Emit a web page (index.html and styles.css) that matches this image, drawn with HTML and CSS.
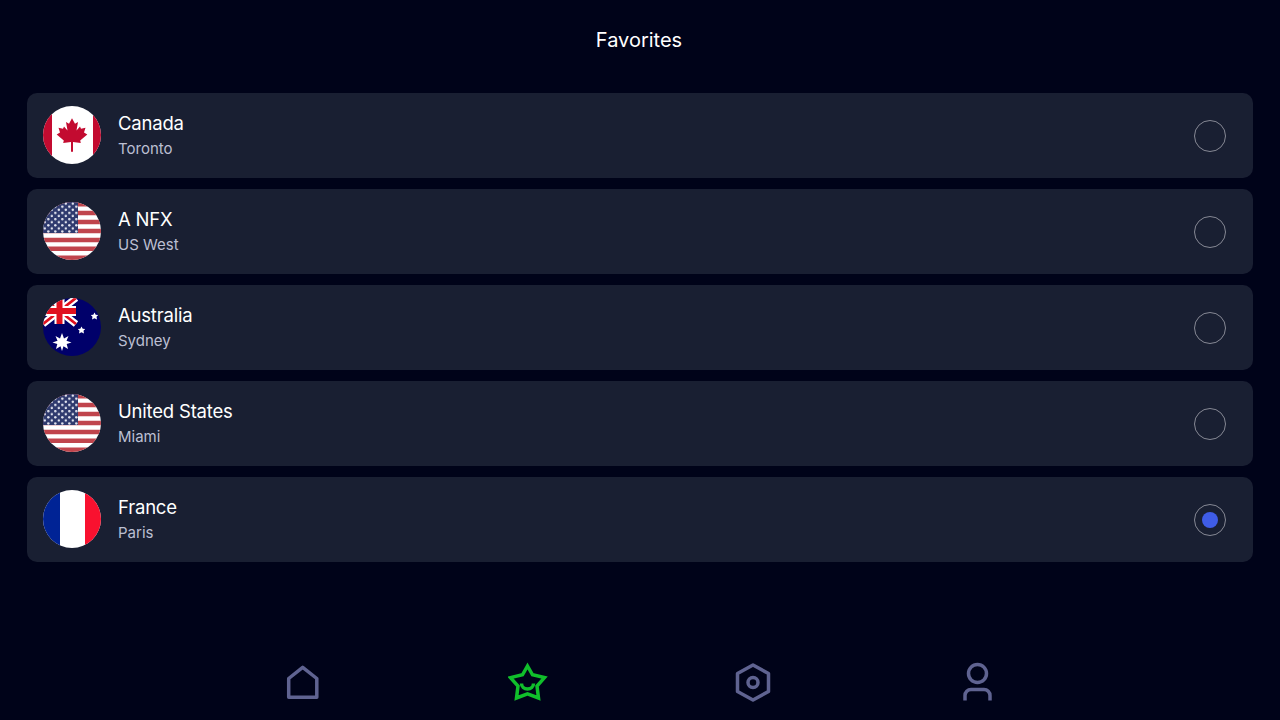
FILE: index.html
```html
<!DOCTYPE html>
<html lang="en">
  <head>
    <meta charset="UTF-8" />
    <meta name="viewport" content="width=device-width, initial-scale=1.0" />
    <title>Favorites</title>
    <link rel="stylesheet" href="styles.css">
  </head>

  <body>
    <h1 class="page-title">Favorites</h1>

    <div class="server-list">
      <div class="server-row">
        <svg class="flag" viewBox="0 0 58 58">
          <rect width="58" height="58" fill="#fff" />
          <rect width="9" height="58" fill="#c30b30" />
          <rect x="50" width="8" height="58" fill="#c30b30" />
          <polygon fill="#c30b30" points="29,12.3 32,17.8 35,16 33.5,24.5 37,20.5 38,22.8 42.5,21.8 41,26.5 44.3,28.5 37.2,34.5 37.8,37 30,36 30,45.7 28,45.7 28,36 20.2,37 20.8,34.5 13.7,28.5 17,26.5 15.5,21.8 20,22.8 21,20.5 24.5,24.5 23,16 26,17.8" />
        </svg>
        <div class="server-text">
          <div class="server-name">Canada</div>
          <div class="server-city">Toronto</div>
        </div>
        <span class="radio"></span>
      </div>

      <div class="server-row">
        <svg class="flag" viewBox="0 0 58 58">
          <defs>
            <pattern id="us-stars" width="7" height="6.2" patternUnits="userSpaceOnUse">
              <circle cx="1.8" cy="1.6" r="1.25" fill="#e4e6f0" />
              <circle cx="5.3" cy="4.7" r="1.25" fill="#e4e6f0" />
            </pattern>
            <symbol id="us-flag" viewBox="0 0 58 58">
              <rect width="58" height="58" fill="#fff" />
              <path fill="none" stroke="#c0444c" stroke-width="4.46" d="M0 2.2H58M0 11.1H58M0 20H58M0 29H58M0 37.9H58M0 46.8H58M0 55.8H58" />
              <rect width="35" height="31" fill="#2f3a6e" />
              <rect width="35" height="31" fill="url(#us-stars)" />
            </symbol>
          </defs>
          <use href="#us-flag" />
        </svg>
        <div class="server-text">
          <div class="server-name">A NFX</div>
          <div class="server-city">US West</div>
        </div>
        <span class="radio"></span>
      </div>

      <div class="server-row">
        <svg class="flag" viewBox="0 0 58 58">
          <rect width="58" height="58" fill="#00006a" />
          <path stroke="#fff" stroke-width="7" d="M0 0L33 26M33 0L0 26" />
          <path stroke="#e0101e" stroke-width="2.8" d="M0 0L33 26M33 0L0 26" />
          <path stroke="#fff" stroke-width="10" d="M16.5 0V26M0 13H33" />
          <path stroke="#e0101e" stroke-width="6" d="M16.5 0V26M0 13H33" />
          <polygon fill="#fff" points="19,35 21,40.5 25.5,38 23.5,42.7 28.5,44.5 23.7,46 25,51 20.5,48.3 19,53 17.5,48.3 13,51 14.3,46 9.5,44.5 14.5,42.7 12.5,38 17,40.5" />
          <polygon fill="#fff" points="38.5,28.5 39.7,30.7 42.2,31 40.5,32.8 41,35.5 38.5,34.3 36,35.5 36.5,32.8 34.8,31 37.3,30.7" />
          <polygon fill="#fff" points="51.5,14.5 52.7,16.7 55.2,17 53.5,18.8 54,21.5 51.5,20.3 49,21.5 49.5,18.8 47.8,17 50.3,16.7" />
        </svg>
        <div class="server-text">
          <div class="server-name">Australia</div>
          <div class="server-city">Sydney</div>
        </div>
        <span class="radio"></span>
      </div>

      <div class="server-row">
        <svg class="flag" viewBox="0 0 58 58">
          <use href="#us-flag" />
        </svg>
        <div class="server-text">
          <div class="server-name">United States</div>
          <div class="server-city">Miami</div>
        </div>
        <span class="radio"></span>
      </div>

      <div class="server-row">
        <svg class="flag" viewBox="0 0 58 58">
          <rect width="58" height="58" fill="#fff" />
          <rect width="17" height="58" fill="#002395" />
          <rect x="42" width="16" height="58" fill="#f9112f" />
        </svg>
        <div class="server-text">
          <div class="server-name">France</div>
          <div class="server-city">Paris</div>
        </div>
        <span class="radio selected"></span>
      </div>
    </div>

    <nav class="bottom-nav">
      <a class="nav-item">
        <svg class="nav-icon" viewBox="0 0 40 40">
          <path d="M19.7 5.3L33.8 16.5V35.2H5.7V16.5Z" />
        </svg>
      </a>
      <a class="nav-item active">
        <svg class="nav-icon" viewBox="0 0 40 40">
          <path class="sharp" d="M19.5 4L24.5 12.8L36.5 15.6L29 24L30.5 36L19.5 31.8L8.5 36L10 24L2.5 15.6L14.5 12.8Z" />
          <path d="M13.5 21.5a6 5.5 0 0 0 12 0" />
        </svg>
      </a>
      <a class="nav-item">
        <svg class="nav-icon" viewBox="0 0 40 40">
          <path d="M20 3L35.5 11.5V29.5L20 38L4.5 29.5V11.5Z" />
          <circle cx="20" cy="20.5" r="5" />
        </svg>
      </a>
      <a class="nav-item">
        <svg class="nav-icon" viewBox="0 0 40 40">
          <circle cx="19.5" cy="11.5" r="9" />
          <path d="M7 38.5V33.5a6 6 0 0 1 6-6H26a6 6 0 0 1 6 6V38.5" />
        </svg>
      </a>
    </nav>
  </body>
</html>
```

FILE: styles.css
```css
:root {
  --bg-color: #000319;
  --card-color: #191f32;
  --muted-color: #bcbfd2;
  --nav-color: #5f6391;
  --active-color: #10bf2b;
  --accent-color: #3f5ce6;
}

html,
body {
  height: 100%;
}

body {
  display: flex;
  flex-direction: column;
  margin: 0;
  background-color: var(--bg-color);
  color: #fff;
  font-family: Inter, "Noto Sans", sans-serif;
  overflow: hidden;
}

.page-title {
  margin: 0;
  padding-right: 2px;
  height: 80px;
  line-height: 80px;
  text-align: center;
  font-size: 20px;
  font-weight: 400;
}

.server-list {
  display: flex;
  flex-direction: column;
  gap: 11px;
  margin-top: 13px;
  padding: 0 27px;
}

.server-row {
  display: flex;
  align-items: center;
  height: 85px;
  padding: 0 27px 0 16px;
  box-sizing: border-box;
  background-color: var(--card-color);
  border-radius: 10px;
}

.flag {
  width: 58px;
  height: 58px;
  margin-top: -1px;
  border-radius: 50%;
  flex-shrink: 0;
}

.server-text {
  flex: 1;
  margin-left: 17px;
  margin-top: 1px;
}

.server-name {
  font-size: 18.5px;
  letter-spacing: -0.2px;
  line-height: 25px;
}

.server-city {
  font-size: 15px;
  line-height: 26px;
  color: var(--muted-color);
}

.radio {
  display: flex;
  align-items: center;
  justify-content: center;
  width: 32px;
  height: 32px;
  box-sizing: border-box;
  border: 1px solid #868894;
  border-radius: 50%;
}

.radio.selected::after {
  content: "";
  width: 16px;
  height: 16px;
  border-radius: 50%;
  background-color: var(--accent-color);
}

.bottom-nav {
  display: flex;
  justify-content: center;
  margin-top: auto;
  padding-bottom: 18px;
}

.nav-item {
  display: flex;
  justify-content: center;
  width: 225px;
  color: var(--nav-color);
}

.nav-item.active {
  color: var(--active-color);
}

.nav-icon {
  display: block;
  width: 40px;
  height: 40px;
  fill: none;
  stroke: currentColor;
  stroke-width: 3.5;
  stroke-linejoin: round;
}

.nav-icon .sharp {
  stroke-linejoin: miter;
}
```
